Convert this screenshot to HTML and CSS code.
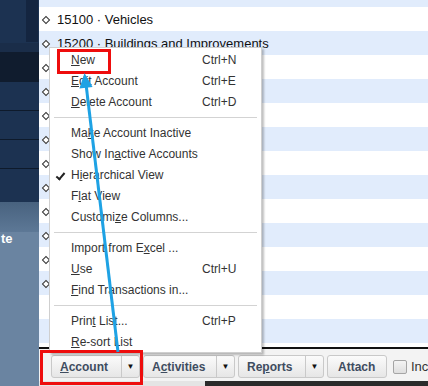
FILE: index.html
```html
<!DOCTYPE html>
<html>
<head>
<title>Chart of Accounts</title>
<link rel="stylesheet" href="styles.css">
</head>
<body>
<div class="screen">
  <!-- left navigation panel -->
  <div class="nav">
    <div class="nav-top"><div class="nav-tab"></div></div>
    <div class="nav-band"></div>
    <div class="nav-dark"></div>
    <div class="nav-row"></div>
    <div class="nav-row"></div>
    <div class="nav-row"></div>
    <div class="nav-row last"></div>
    <div class="nav-head"></div>
    <div class="nav-light"><span class="nav-label">te</span></div>
  </div>

  <div class="main">
    <div class="list">
      <div class="rows">
        <div class="row alt"></div>
        <div class="row"><span class="dia"></span>15100 · Vehicles</div>
        <div class="row alt"><span class="dia"></span>15200 · Buildings and Improvements</div>
        <div class="row"><span class="dia"></span></div>
        <div class="row alt"><span class="dia"></span></div>
        <div class="row"><span class="dia"></span></div>
        <div class="row alt"><span class="dia"></span></div>
        <div class="row"><span class="dia"></span></div>
        <div class="row alt"><span class="dia"></span></div>
        <div class="row"><span class="dia"></span></div>
        <div class="row alt"><span class="dia"></span></div>
        <div class="row"><span class="dia"></span></div>
        <div class="row alt"><span class="dia"></span></div>
        <div class="row"></div>
        <div class="row alt"></div>
        <div class="row"></div>
      </div>
    </div>

    <div class="toolbar">
      <div class="btn split w-account"><span class="btn-main"><u>A</u>ccount</span><span class="btn-drop">&#9660;</span></div>
      <div class="btn split w-activities"><span class="btn-main">A<u>c</u>tivities</span><span class="btn-drop">&#9660;</span></div>
      <div class="btn split w-reports"><span class="btn-main">Re<u>p</u>orts</span><span class="btn-drop">&#9660;</span></div>
      <div class="btn w-attach"><span class="btn-main">Attach</span></div>
      <label class="check"><span class="box"></span><span class="check-text">Inc</span></label>
    </div>
    <div class="bottom-strip"><div class="strip-light"></div><div class="strip-dark"></div></div>
  </div>
</div>

<!-- Account context menu -->
<div class="menu">
  <div class="item"><span class="label"><u>N</u>ew</span><span class="key">Ctrl+N</span></div>
  <div class="item"><span class="label"><u>E</u>dit Account</span><span class="key">Ctrl+E</span></div>
  <div class="item"><span class="label"><u>D</u>elete Account</span><span class="key">Ctrl+D</span></div>
  <div class="sep"></div>
  <div class="item"><span class="label">Ma<u>k</u>e Account Inactive</span></div>
  <div class="item"><span class="label">Show In<u>a</u>ctive Accounts</span></div>
  <div class="item checked"><span class="label">H<u>i</u>erarchical View</span></div>
  <div class="item"><span class="label">F<u>l</u>at View</span></div>
  <div class="item"><span class="label">Customi<u>z</u>e Columns...</span></div>
  <div class="sep"></div>
  <div class="item"><span class="label">Import from E<u>x</u>cel ...</span></div>
  <div class="item"><span class="label"><u>U</u>se</span><span class="key">Ctrl+U</span></div>
  <div class="item"><span class="label"><u>F</u>ind Transactions in...</span></div>
  <div class="sep"></div>
  <div class="item"><span class="label">Prin<u>t</u> List...</span><span class="key">Ctrl+P</span></div>
  <div class="item"><span class="label"><u>R</u>e-sort List</span></div>
</div>

<!-- annotations -->
<div class="mark mark-new"></div>
<div class="mark mark-account"></div>
<svg class="arrow" width="428" height="386" viewBox="0 0 428 386">
  <line x1="118" y1="352" x2="86" y2="84"/>
  <polygon points="84.5,73 92.6,87 79.4,88.6"/>
</svg>
</body>
</html>
```

FILE: styles.css
```css
/* page */
html, body { margin: 0; padding: 0; }
body {
  width: 428px; height: 386px; overflow: hidden; position: relative;
  font-family: "Liberation Sans", Arial, sans-serif; font-size: 12px; color: #333;
}
.screen { display: flex; height: 386px; }

/* left navigation */
.nav { width: 39px; display: flex; flex-direction: column; background: #6a84a1; overflow: hidden; }
.nav-top { height: 43px; background: #1c3251; display: flex; justify-content: flex-end; }
.nav-tab { width: 12px; height: 42px; margin-right: 1px; background: #142540; }
.nav-band { height: 9px; background: #1a2d49; }
.nav-dark { height: 30px; background: #101c2e; }
.nav-row { height: 28px; background: #1c3251; border-bottom: 1px solid #0e1a2b; }
.nav-row.last { height: 33px; border-bottom: 0; }
.nav-head { height: 30px; background: linear-gradient(#48627f, #5d7896); }
.nav-light { flex: 1; background: #6a84a1; }
.nav-label {
  display: block; margin: -1px 0 0 1px; color: #fff; font-weight: bold; font-size: 13px;
}

/* account list */
.main { flex: 1; display: flex; flex-direction: column; min-width: 0; }
.list { height: 347px; overflow: hidden; border-bottom: 2px solid #111; background: #fff; }
.rows { margin-top: -17px; }
.row {
  height: 24px; display: flex; align-items: center; white-space: nowrap;
  font-size: 13px; color: #111; background: #fff;
}
.row.alt { background: #e1ecfc; }
.dia {
  width: 4px; height: 4px; margin: 1px 8px 0 4px; border: 1px solid #333;
  transform: rotate(45deg); background: #fff;
}

/* toolbar */
.toolbar {
  height: 32px; background: #f3f3f3; display: flex; align-items: flex-start; overflow: hidden;
  gap: 3px; padding: 6px 0 0 12px; box-sizing: border-box;
}
.btn {
  flex-shrink: 0; height: 23px; box-sizing: border-box; display: flex; align-items: center;
  border: 1px solid #c9c9c9; border-radius: 3px;
  background: linear-gradient(#fbfbfb, #e6e6e6);
  font-weight: bold; color: #3e4c5f; font-size: 12px;
}
.btn-main { flex: 1; padding-left: 8px; }
.btn-drop {
  width: 17px; align-self: stretch; display: flex; align-items: center; justify-content: center;
  border-left: 1px solid #c9c9c9; font-size: 8px; color: #111;
}
.w-account { width: 89px; }
.w-activities { width: 92px; }
.w-reports { width: 86px; }
.w-attach { width: 60px; }
.w-attach .btn-main { padding-left: 10px; }
.check { flex-shrink: 0; display: flex; align-items: center; margin: 4px 0 0 3px; white-space: nowrap; color: #333; font-size: 13px; }
.box {
  width: 12px; height: 12px; margin-right: 4px; border: 1px solid #a5a5a5; border-radius: 2px;
  background: linear-gradient(#f4f4f4, #dedede);
}
.bottom-strip { flex: 1; display: flex; }
.strip-light { width: 166px; background: #e4e4e4; }
.strip-dark { flex: 1; background: #2b2b2b; }

/* context menu */
.menu {
  position: absolute; left: 49px; top: 47px; width: 213px; height: 306px; box-sizing: border-box;
  background: #fff; border: 1px solid #cfcfcf; padding-top: 1px;
  box-shadow: 2px 2px 2px rgba(0, 0, 0, 0.25);
}
.item { height: 21px; display: flex; align-items: center; position: relative; white-space: nowrap; }
.label { flex: 1; padding-left: 21px; }
.key { width: 59px; }
.checked::before {
  content: ""; position: absolute; left: 8px; top: 7px; width: 3px; height: 7px;
  border: solid #222; border-width: 0 2px 2px 0; transform: rotate(40deg);
}
.sep { height: 10px; display: flex; align-items: center; padding: 0 4px 0 4px; }
.sep::after { content: ""; flex: 1; height: 1px; background: #d3d3d3; }

/* annotations */
.mark { position: absolute; border: 3px solid #ee0d0d; box-sizing: border-box; }
.mark-new { left: 57px; top: 49px; width: 54px; height: 25px; }
.mark-account { left: 40px; top: 350px; width: 103px; height: 35px; }
.arrow { position: absolute; left: 0; top: 0; }
.arrow line { stroke: #1ea2e4; stroke-width: 3; }
.arrow polygon { fill: #1ea2e4; }
```
